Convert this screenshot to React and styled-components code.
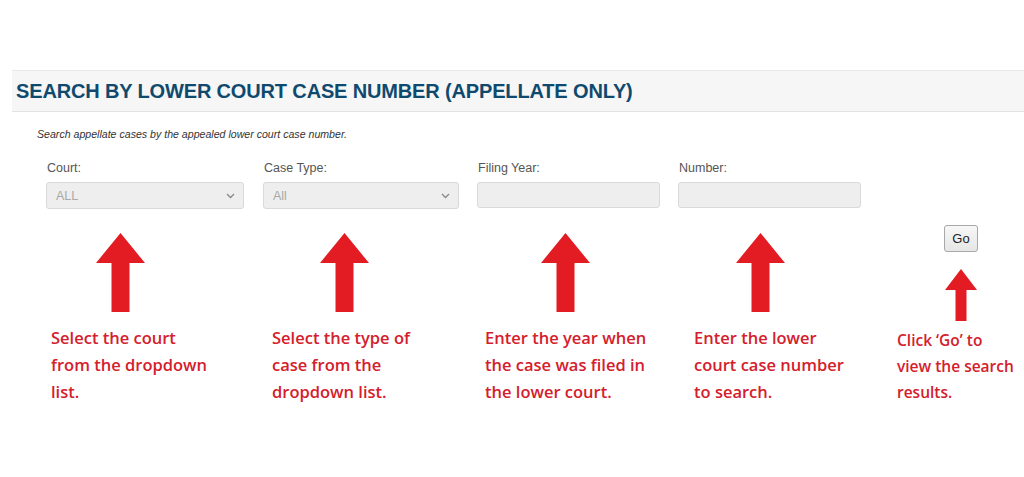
import React from "react";
import styled, { createGlobalStyle } from "styled-components";

const GlobalStyle = createGlobalStyle`
  html, body {
    margin: 0;
    padding: 0;
    background: #ffffff;
  }
  body {
    font-family: "Liberation Sans", Arial, sans-serif;
  }
`;

const Page = styled.div`
  width: 1024px;
  height: 477px;
  padding-top: 70px;
  box-sizing: border-box;
  overflow: hidden;
`;

const Header = styled.div`
  margin-left: 12px;
  height: 42px;
  box-sizing: border-box;
  display: flex;
  align-items: center;
  padding-left: 4px;
  background: #f6f6f6;
  border-top: 1px solid #e9e9e9;
  border-bottom: 1px solid #e2e2e2;
`;

const Title = styled.h2`
  margin: 0;
  font-size: 20px;
  font-weight: bold;
  color: #0f4a6e;
  letter-spacing: -0.15px;
`;

const Intro = styled.p`
  margin: 16px 0 0 37px;
  font-size: 10.6px;
  line-height: 12px;
  font-style: italic;
  color: #333;
`;

const Fields = styled.div`
  display: flex;
  gap: 18px;
  margin: 21px 0 0 46px;
`;

const Field = styled.div`
  display: flex;
  flex-direction: column;
  width: ${(p) => p.$width}px;
  margin-left: ${(p) => p.$shift || 0}px;
`;

const Label = styled.label`
  font-size: 12.5px;
  line-height: 14px;
  color: #555;
  margin-bottom: 7px;
  padding-left: 1px;
`;

const Box = styled.div`
  height: ${(p) => p.$height || 27}px;
  box-sizing: border-box;
  background: #eeeeee;
  border: 1px solid #d9d9d9;
  border-radius: 3px;
  display: flex;
  align-items: center;
  justify-content: space-between;
  padding: 0 8px 0 9px;
  font-size: 12.5px;
  color: #a9a9a9;
`;

const Chevron = () => (
  <svg width="9" height="6" viewBox="0 0 9 6">
    <path d="M1 1l3.5 3.5L8 1" fill="none" stroke="#888" strokeWidth="1.3" />
  </svg>
);

const Notes = styled.div`
  display: grid;
  grid-template-columns: 221px 213px 209px 203px 1fr;
  margin-left: 51px;
`;

const Note = styled.div`
  display: flex;
  flex-direction: column;
  padding-top: ${(p) => p.$top}px;
`;

const ArrowWrap = styled.div`
  margin-left: ${(p) => p.$offset}px;
  line-height: 0;
`;

const Caption = styled.p`
  margin: ${(p) => p.$gap}px 0 0;
  font-family: "Open Sans", Lato, sans-serif;
  font-size: ${(p) => p.$size}px;
  line-height: ${(p) => p.$line}px;
  color: #d4202c;
  font-weight: 600;
  white-space: nowrap;
`;

const GoButton = styled.button`
  width: 34px;
  height: 27px;
  margin-left: 47px;
  padding: 0;
  font-family: "Liberation Sans", Arial, sans-serif;
  font-size: 13px;
  color: #222;
  background: linear-gradient(#f7f7f7, #e6e6e6);
  border: 1px solid #a8a8a8;
  border-radius: 3px;
  margin-bottom: 17px;
`;

const Arrow = ({ w, h, head, shaft }) => {
  const l = (w - shaft) / 2;
  return (
    <svg width={w} height={h} viewBox={`0 0 ${w} ${h}`}>
      <path
        d={`M${w / 2} 0 L${w} ${head} L${l + shaft} ${head} L${l + shaft} ${h} L${l} ${h} L${l} ${head} L0 ${head} Z`}
        fill="#e31b23"
      />
    </svg>
  );
};

const notes = [
  { offset: 45, lines: ["Select the court", "from the dropdown", "list."] },
  { offset: 48, lines: ["Select the type of", "case from the", "dropdown list."] },
  { offset: 56, lines: ["Enter the year when", "the case was filed in", "the lower court."] },
  { offset: 42, lines: ["Enter the lower", "court case number", "to search."] },
];

export default function App() {
  return (
    <>
      <GlobalStyle />
      <Page>
        <Header>
          <Title>SEARCH BY LOWER COURT CASE NUMBER (APPELLATE ONLY)</Title>
        </Header>
        <Intro>Search appellate cases by the appealed lower court case number.</Intro>
        <Fields>
          <Field $width={198}>
            <Label>Court:</Label>
            <Box>
              ALL
              <Chevron />
            </Box>
          </Field>
          <Field $width={196} $shift={1}>
            <Label>Case Type:</Label>
            <Box>
              All
              <Chevron />
            </Box>
          </Field>
          <Field $width={183}>
            <Label>Filing Year:</Label>
            <Box $height={26} />
          </Field>
          <Field $width={183}>
            <Label>Number:</Label>
            <Box $height={26} />
          </Field>
        </Fields>
        <Notes>
          {notes.map((n, i) => (
            <Note key={i} $top={24}>
              <ArrowWrap $offset={n.offset}>
                <Arrow w={49} h={79} head={30} shaft={18} />
              </ArrowWrap>
              <Caption $gap={12} $size={16.5} $line={27}>
                {n.lines.map((t, j) => (
                  <React.Fragment key={j}>
                    {t}
                    <br />
                  </React.Fragment>
                ))}
              </Caption>
            </Note>
          ))}
          <Note $top={16}>
            <GoButton>Go</GoButton>
            <ArrowWrap $offset={48}>
              <Arrow w={32} h={52} head={21} shaft={11} />
            </ArrowWrap>
            <Caption $gap={6} $size={15.5} $line={26}>
              Click ‘Go’ to
              <br />
              view the search
              <br />
              results.
            </Caption>
          </Note>
        </Notes>
      </Page>
    </>
  );
}
